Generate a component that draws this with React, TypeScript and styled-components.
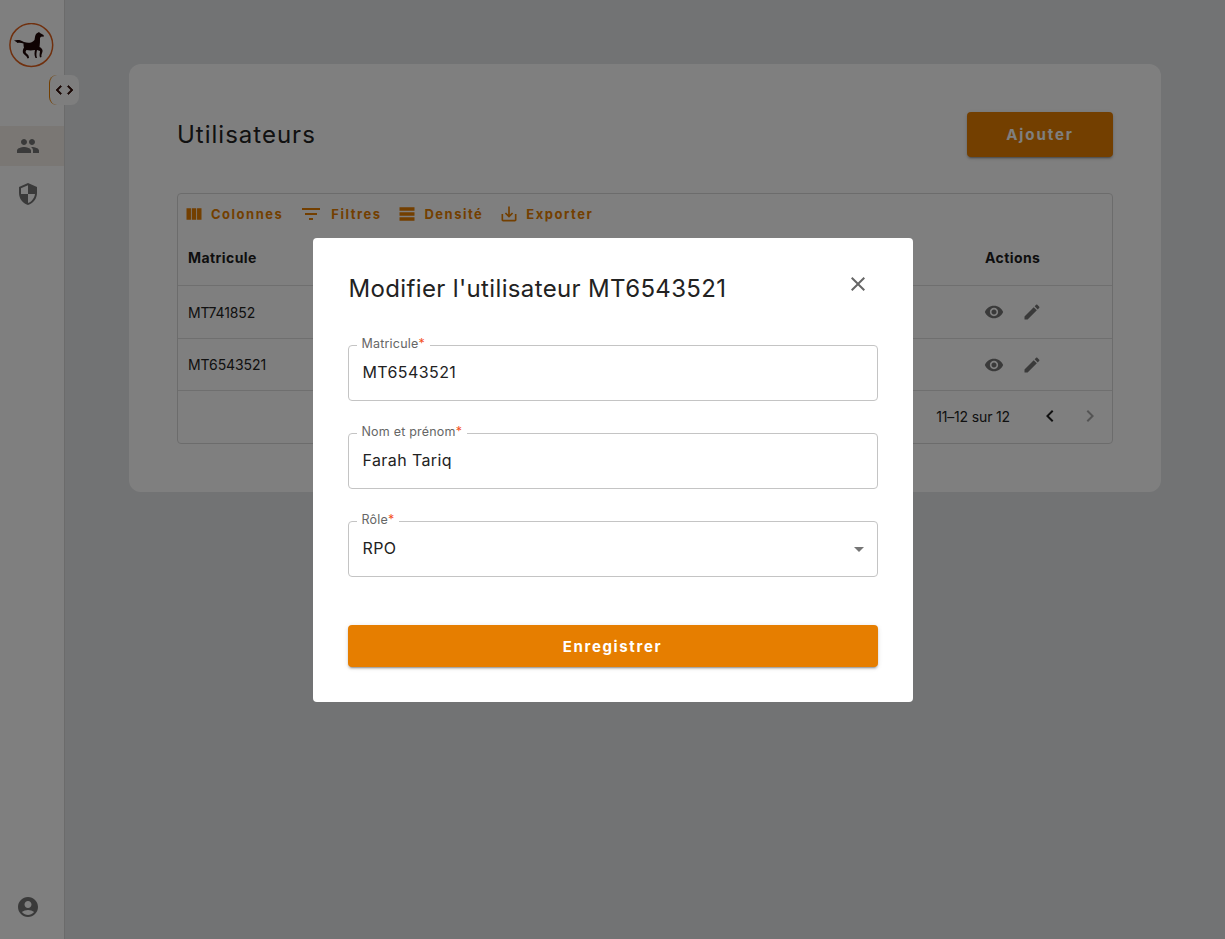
import React from 'react';
import styled, { createGlobalStyle } from 'styled-components';

const FONT = `Inter, "Liberation Sans", sans-serif`;
const ORANGE = '#e67e00';

const Global = createGlobalStyle`
  html, body { margin: 0; padding: 0; height: 100%; }
  body { font-family: ${FONT}; background: #e5e7e9; color: #1f1f1f; }
  * { box-sizing: border-box; }
`;

const Page = styled.div`
  display: flex;
  height: 939px;
  overflow: hidden;
`;
const Sidebar = styled.aside`
  position: relative;
  width: 65px;
  flex: none;
  background: #fff;
  border-right: 1px solid #d6d6d6;
  display: flex;
  flex-direction: column;
`;
const LogoWrap = styled.div`
  height: 44px;
  margin: 23px 0 59px 9px;
`;
const Toggle = styled.button`
  position: absolute;
  left: 49px;
  top: 75px;
  width: 30px;
  height: 30px;
  padding: 0;
  border: 0;
  border-left: 1px solid ${ORANGE};
  border-radius: 8px;
  background: #fcfcfc;
  display: flex;
  align-items: center;
  justify-content: center;
  color: #34100a;
  svg { stroke: currentColor; stroke-width: 1px; }
  svg + svg { margin-left: -7px; }
`;
const NavItem = styled.div<{ $active?: boolean }>`
  height: 40px;
  margin-bottom: 8px;
  padding-left: 16px;
  display: flex;
  align-items: center;
  color: #757575;
  background: ${p => (p.$active ? '#f4efe8' : 'transparent')};
`;
const Spacer = styled.div`
  flex: 1;
`;
const Account = styled.div`
  height: 24px;
  margin: 0 0 20px 16px;
  color: #757575;
`;
const Main = styled.main`
  flex: 1;
  padding: 64px 64px 0;
`;
const Card = styled.section`
  height: 428px;
  background: #fff;
  border-radius: 12px;
  padding: 48px;
`;
const CardHead = styled.div`
  display: flex;
  justify-content: space-between;
  align-items: flex-start;
  height: 81px;
`;
const Title = styled.h1`
  margin: 9px 0 0;
  font-size: 24px;
  line-height: 28px;
  font-weight: 400;
  letter-spacing: 1px;
  color: #222;
`;
const AddButton = styled.button`
  width: 146px;
  height: 45px;
  border: 0;
  border-radius: 4px;
  background: ${ORANGE};
  color: #fff;
  font: 700 15px ${FONT};
  letter-spacing: 1.9px;
  box-shadow: 0 3px 1px -2px rgba(0,0,0,.2), 0 2px 2px rgba(0,0,0,.14), 0 1px 5px rgba(0,0,0,.12);
`;
const Grid = styled.div`
  height: 251px;
  border: 1px solid #d9d9d9;
  border-radius: 4px;
  display: flex;
  flex-direction: column;
`;
const Toolbar = styled.div`
  height: 40px;
  padding: 0 6px;
  display: flex;
  align-items: center;
  gap: 16px;
`;
const ToolButton = styled.div<{ $gap?: number }>`
  display: flex;
  align-items: center;
  gap: ${p => p.$gap ?? 7}px;
  color: ${ORANGE};
  font-size: 13px;
  font-weight: 700;
  letter-spacing: 1.5px;
`;
const Row = styled.div<{ $h: number; $head?: boolean }>`
  height: ${p => p.$h}px;
  flex: none;
  padding: 0 10px ${p => (p.$head ? '5px' : '0')};
  display: flex;
  align-items: center;
  justify-content: space-between;
  border-bottom: 1px solid #dedede;
  font-size: 14px;
  letter-spacing: -0.08px;
  color: #222;
`;
const HeadCell = styled.span<{ $w?: number }>`
  font-weight: 700;
  letter-spacing: 0.42px;
  color: #1d1d1d;
  ${p => (p.$w ? `width: ${p.$w}px;` : '')}
`;
const Actions = styled.div`
  width: 118px;
  display: flex;
  align-items: center;
  gap: 18px;
  color: #757575;
`;
const Footer = styled.div`
  flex: 1;
  padding: 0 10px 2px 0;
  display: flex;
  align-items: center;
  justify-content: flex-end;
  font-size: 14px;
  color: #222;
`;
const PageText = styled.span`
  margin-right: 28px;
  letter-spacing: -0.15px;
`;
const PageButton = styled.span<{ $off?: boolean }>`
  width: 24px;
  height: 24px;
  margin-left: ${p => (p.$off ? '16px' : '0')};
  color: ${p => (p.$off ? '#a8a8a8' : '#222')};
`;
const Backdrop = styled.div`
  position: fixed;
  inset: 0;
  background: rgba(0,0,0,.5);
  display: flex;
  align-items: center;
  justify-content: center;
`;
const Modal = styled.div`
  position: relative;
  width: 600px;
  height: 464px;
  background: #fff;
  border-radius: 4px;
  padding: 35px;
`;
const ModalTitle = styled.h2`
  margin: 0 0 40px 1px;
  height: 32px;
  font-size: 24px;
  line-height: 32px;
  font-weight: 400;
  letter-spacing: 0.36px;
  color: #222;
`;
const Close = styled.button`
  position: absolute;
  right: 43px;
  top: 34px;
  width: 24px;
  height: 24px;
  padding: 0;
  border: 0;
  background: none;
  color: #666;
`;
const Field = styled.div`
  position: relative;
  height: 56px;
  margin-bottom: 32px;
  padding: 0 13px 2px 14px;
  border: 1px solid #c4c4c4;
  border-radius: 4px;
  display: flex;
  align-items: center;
  justify-content: space-between;
  font-size: 16px;
  letter-spacing: 0.4px;
  color: #222;
`;
const FieldLabel = styled.label`
  position: absolute;
  left: 8px;
  top: -10px;
  padding: 0 5px;
  background: #fff;
  font-size: 12.5px;
  line-height: 16px;
  letter-spacing: 0.2px;
  color: #666;
`;
const Required = styled.span`
  color: #f4511e;
`;
const Caret = styled.span`
  height: 24px;
  margin: 2px -7px 0 0;
  color: #757575;
`;
const SaveButton = styled.button`
  display: block;
  width: 100%;
  height: 42px;
  margin-top: 48px;
  padding: 2px 0 0;
  border: 0;
  border-radius: 4px;
  background: ${ORANGE};
  color: #fff;
  font: 700 15px ${FONT};
  letter-spacing: 1.65px;
  box-shadow: 0 3px 1px -2px rgba(0,0,0,.2), 0 2px 2px rgba(0,0,0,.14), 0 1px 5px rgba(0,0,0,.12);
`;
const Svg = styled.svg<{ $s?: number }>`
  display: block;
  width: ${p => p.$s ?? 24}px;
  height: ${p => p.$s ?? 24}px;
  fill: currentColor;
  flex: none;
`;

const Icon = ({ d, s }: { d: string; s?: number }) => (
  <Svg $s={s} viewBox="0 0 24 24"><path d={d} /></Svg>
);

const P = {
  column: 'M14.67 5v14H9.33V5h5.34zm1 14H21V5h-5.33v14zm-7.34 0V5H3v14h5.33z',
  filter: 'M10 18h4v-2h-4v2zM3 6v2h18V6H3zm3 7h12v-2H6v2z',
  density: 'M21 8H3V4h18v4zm0 2H3v4h18v-4zm0 6H3v4h18v-4z',
  save: 'M19 12v7H5v-7H3v7c0 1.1.9 2 2 2h14c1.1 0 2-.9 2-2v-7h-2zm-6 .67l2.59-2.58L17 11.5l-5 5-5-5 1.41-1.41L11 12.67V3h2z',
  eye: 'M12 4.5C7 4.5 2.73 7.61 1 12c1.73 4.39 6 7.5 11 7.5s9.27-3.11 11-7.5c-1.73-4.39-6-7.5-11-7.5zM12 17c-2.76 0-5-2.24-5-5s2.24-5 5-5 5 2.24 5 5-2.24 5-5 5zm0-8c-1.66 0-3 1.34-3 3s1.34 3 3 3 3-1.34 3-3-1.34-3-3-3z',
  edit: 'M3 17.25V21h3.75L17.81 9.94l-3.75-3.75L3 17.25zM20.71 7.04c.39-.39.39-1.02 0-1.41l-2.34-2.34c-.39-.39-1.02-.39-1.41 0l-1.83 1.83 3.75 3.75 1.83-1.83z',
  people: 'M16 11c1.66 0 2.99-1.34 2.99-3S17.66 5 16 5c-1.66 0-3 1.34-3 3s1.34 3 3 3zm-8 0c1.66 0 2.99-1.34 2.99-3S9.66 5 8 5C6.34 5 5 6.34 5 8s1.34 3 3 3zm0 2c-2.33 0-7 1.17-7 3.5V19h14v-2.5c0-2.33-4.67-3.5-7-3.5zm8 0c-.29 0-.62.02-.97.05 1.16.84 1.97 1.97 1.97 3.45V19h6v-2.5c0-2.33-4.67-3.5-7-3.5z',
  shield: 'M12 1L3 5v6c0 5.55 3.84 10.74 9 12 5.16-1.26 9-6.45 9-12V5l-9-4zm0 10.99h7c-.53 4.12-3.28 7.79-7 8.94V12H5V6.3l7-3.11v8.8z',
  account: 'M12 2C6.48 2 2 6.48 2 12s4.48 10 10 10 10-4.48 10-10S17.52 2 12 2zm0 4c1.93 0 3.5 1.57 3.5 3.5S13.93 13 12 13s-3.5-1.57-3.5-3.5S10.07 6 12 6zm0 14c-2.03 0-4.43-.82-6.14-2.88C7.55 15.8 9.68 15 12 15s4.45.8 6.14 2.12C16.43 19.18 14.03 20 12 20z',
  left: 'M15.41 7.41 14 6l-6 6 6 6 1.41-1.41L10.83 12z',
  right: 'M10 6 8.59 7.41 13.17 12l-4.58 4.59L10 18l6-6z',
  close: 'M19 6.41 17.59 5 12 10.59 6.41 5 5 6.41 10.59 12 5 17.59 6.41 19 12 13.41 17.59 19 19 17.59 13.41 12z',
  drop: 'M7 10l5 5 5-5z',
};

const Logo = () => (
  <svg width="45" height="45" viewBox="0 0 45 45" style={{ display: 'block' }}>
    <circle cx="22.3" cy="22" r="21.4" fill="none" stroke="#e0601c" strokeWidth="1.5" />
    <path
      fill="#1e0606"
      d="M5 17.5C8 16.5 12 16.8 15 19c4 1.5 8 1 10.5-2 .5-3 .5-5 2-6.5L30 9l1 1 3.500 2 .5 1.500-3 .3-1 1.200c0 3 0 6-.5 9 2 1 3.500 2.500 3 4.500-.5 2-1.500 3.500-1 5.500l-1.500.5c-1-2.500 0-5 0-6.500l-3-1c-.5 3-1 5 0 8h-1.500c-1.500-3-1-6-.5-8-3 .5-6 .5-8.500 0-1 1.500-1.500 2 .5 4 1.500 1 2 2.500 2 4l-1.500.5c-.5-2.500-3.500-3.500-4.500-5.500-.5-2 0-4 1-5.500-.5-1.500-.5-3-.5-4-2.500-1-4.500-1-6-.5l-1-1z"
    />
  </svg>
);

const users = ['MT741852', 'MT6543521'];

export default function App() {
  return (
    <>
      <Global />
      <Page>
        <Sidebar>
          <LogoWrap><Logo /></LogoWrap>
          <Toggle>
            <Icon d={P.left} s={18} />
            <Icon d={P.right} s={18} />
          </Toggle>
          <NavItem $active><Icon d={P.people} /></NavItem>
          <NavItem><Icon d={P.shield} /></NavItem>
          <Spacer />
          <Account><Icon d={P.account} /></Account>
        </Sidebar>
        <Main>
          <Card>
            <CardHead>
              <Title>Utilisateurs</Title>
              <AddButton>Ajouter</AddButton>
            </CardHead>
            <Grid>
              <Toolbar>
                <ToolButton><Icon d={P.column} s={20} />Colonnes</ToolButton>
                <ToolButton $gap={8}><Icon d={P.filter} />Filtres</ToolButton>
                <ToolButton><Icon d={P.density} s={20} />Densité</ToolButton>
                <ToolButton><Icon d={P.save} s={20} />Exporter</ToolButton>
              </Toolbar>
              <Row $h={52} $head>
                <HeadCell>Matricule</HeadCell>
                <HeadCell $w={117}>Actions</HeadCell>
              </Row>
              {users.map(u => (
                <Row $h={u === users[0] ? 53 : 52} key={u}>
                  <span>{u}</span>
                  <Actions>
                    <Icon d={P.eye} s={20} />
                    <Icon d={P.edit} s={20} />
                  </Actions>
                </Row>
              ))}
              <Footer>
                <PageText>11–12 sur 12</PageText>
                <PageButton><Icon d={P.left} /></PageButton>
                <PageButton $off><Icon d={P.right} /></PageButton>
              </Footer>
            </Grid>
          </Card>
        </Main>
      </Page>
      <Backdrop>
        <Modal>
          <ModalTitle>Modifier l'utilisateur MT6543521</ModalTitle>
          <Close><Icon d={P.close} /></Close>
          <Field>
            <FieldLabel>Matricule<Required>*</Required></FieldLabel>
            MT6543521
          </Field>
          <Field>
            <FieldLabel>Nom et prénom<Required>*</Required></FieldLabel>
            Farah Tariq
          </Field>
          <Field>
            <FieldLabel>Rôle<Required>*</Required></FieldLabel>
            RPO
            <Caret><Icon d={P.drop} /></Caret>
          </Field>
          <SaveButton>Enregistrer</SaveButton>
        </Modal>
      </Backdrop>
    </>
  );
}
